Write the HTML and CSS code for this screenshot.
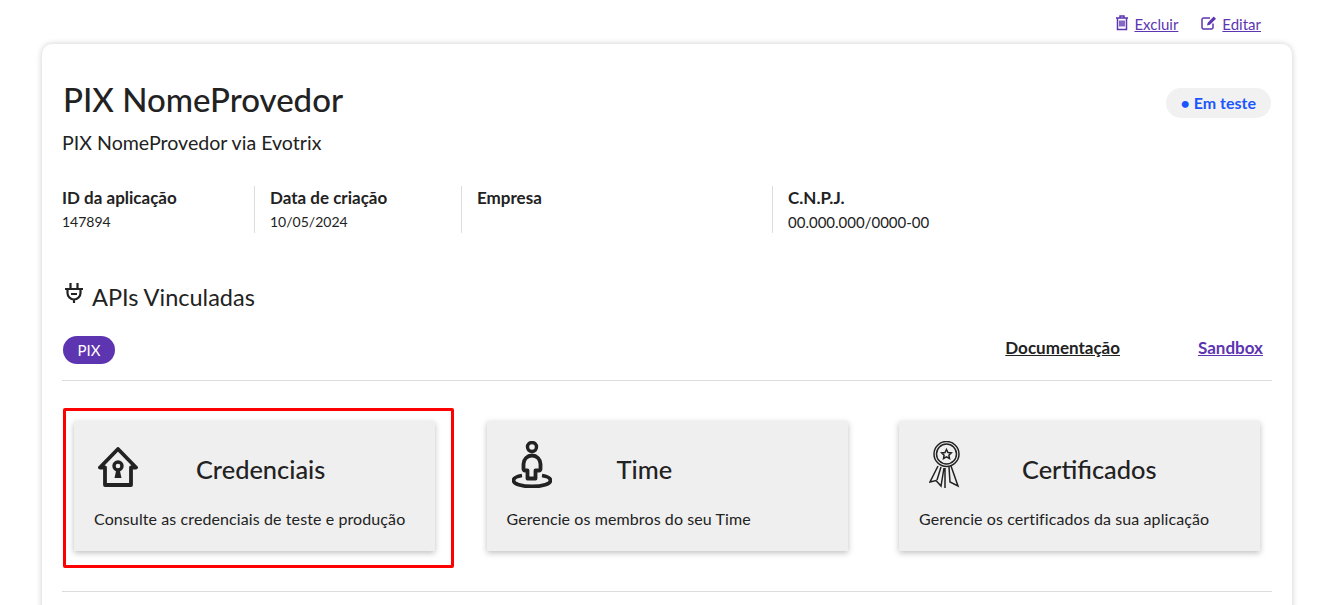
FILE: index.html
```html
<!DOCTYPE html>
<html lang="pt-BR">
<head>
    <meta charset="UTF-8">
    <meta name="viewport" content="width=device-width, initial-scale=1.0">
    <title>PIX NomeProvedor</title>
    <link rel="stylesheet" href="styles.css">
</head>
<body>
    <div class="top-actions">
        <span class="action">
            <svg class="action-icon" viewBox="0 0 14 16" width="14" height="16"><path d="M1 3h12M5 3V1h4v2M2.500 3v11.500h9V3M5 5.500v6M7 5.500v6M9 5.500v6" fill="none" stroke="currentColor" stroke-width="1.500"/></svg>
            <a href="#">Excluir</a>
        </span>
        <span class="action action-edit">
            <svg class="action-icon" viewBox="0 0 17 15" width="17" height="15"><path d="M12 8.500V12.500a1.500 1.500 0 0 1-1.500 1.500h-8A1.500 1.500 0 0 1 1 12.500v-8A1.500 1.500 0 0 1 2.500 3H9" fill="none" stroke="currentColor" stroke-width="1.500"/><path d="M6 10.500l.7-2.800 6-6.200 2.300 2.200-6.100 6.100z" fill="currentColor"/></svg>
            <a href="#">Editar</a>
        </span>
    </div>

    <div class="app-card">
        <div class="app-header">
            <div>
                <h1>PIX NomeProvedor</h1>
                <p class="subtitle">PIX NomeProvedor via Evotrix</p>
            </div>
            <span class="status">• Em teste</span>
        </div>

        <div class="info-row">
            <div class="info-item">
                <strong>ID da aplicação</strong>
                <span>147894</span>
            </div>
            <div class="info-item">
                <strong>Data de criação</strong>
                <span>10/05/2024</span>
            </div>
            <div class="info-item">
                <strong>Empresa</strong>
                <span></span>
            </div>
            <div class="info-item">
                <strong>C.N.P.J.</strong>
                <span class="cnpj">00.000.000/0000-00</span>
            </div>
        </div>

        <h2 class="section-title">
            <svg viewBox="0 0 18 20" width="18" height="20"><path d="M5.500 0v6M12.500 0v6M0 6h18M2.500 6v4a6.500 6.500 0 0 0 13 0V6M9 16v4M6 11h6" fill="none" stroke="#222" stroke-width="2.200"/></svg>
            APIs Vinculadas
        </h2>

        <div class="api-row">
            <span class="pill">PIX</span>
            <div class="api-links">
                <a href="#" class="doc-link">Documentação</a>
                <a href="#" class="sandbox-link">Sandbox</a>
            </div>
        </div>

        <div class="tiles">
            <div class="tile tile-selected">
                <div class="tile-head">
                    <svg class="tile-icon icon-house" viewBox="0 0 40 40" width="40" height="40"><path d="M2 20.500L20 2l18 18.500h-5M2 20.500h5M7 20.500V38h26V20.500" fill="none" stroke="#222" stroke-width="3.800" stroke-linejoin="round" stroke-linecap="round"/><circle cx="20" cy="19" r="4" fill="none" stroke="#222" stroke-width="3.400"/><path d="M18.500 22h3l2 9h-7z" fill="#222"/></svg>
                    <h3 class="title-credenciais">Credenciais</h3>
                </div>
                <p>Consulte as credenciais de teste e produção</p>
            </div>
            <div class="tile">
                <div class="tile-head">
                    <svg class="tile-icon icon-person" viewBox="0 0 40 47" width="40" height="47"><circle cx="20" cy="6" r="4.500" fill="none" stroke="#222" stroke-width="3.400"/><path d="M15.500 37.500V29.500H13a1.500 1.500 0 0 1-1.500-1.500V23a8.500 8.500 0 0 1 17 0v5a1.500 1.500 0 0 1-1.500 1.500h-3.500V37.500z" fill="none" stroke="#222" stroke-width="3.800" stroke-linejoin="round"/><path d="M10 34.500C4 35.500 1.500 37.500 1.500 39.500c0 3.500 8 6 18.500 6s18.500-2.500 18.500-6c0-2-2.500-4-8.500-5" fill="none" stroke="#222" stroke-width="3.800"/></svg>
                    <h3 class="title-time">Time</h3>
                </div>
                <p>Gerencie os membros do seu Time</p>
            </div>
            <div class="tile">
                <div class="tile-head">
                    <svg class="tile-icon icon-badge" viewBox="0 0 32 47" width="32" height="47"><circle cx="17.500" cy="13" r="12.500" fill="none" stroke="#222" stroke-width="1.500"/><circle cx="17.500" cy="13" r="10" fill="none" stroke="#222" stroke-width="1.500"/><path d="M17.500 8.500l1.500 3 3.300.4-2.400 2.300.6 3.300-3-1.600-3 1.600.6-3.300-2.400-2.300 3.300-.4z" fill="none" stroke="#222" stroke-width="1.500"/><path d="M9 25L1 41l6-1.500 5 5.500 3-18M12 26L8 39M16 27v20M20 26l1 15 8 4-7-20" fill="none" stroke="#222" stroke-width="1.500"/></svg>
                    <h3 class="title-certificados">Certificados</h3>
                </div>
                <p>Gerencie os certificados da sua aplicação</p>
            </div>
        </div>

        <hr class="bottom-line">
    </div>
</body>
</html>
```

FILE: styles.css
```css
body {
    font-family: "Lato", "Noto Sans", sans-serif;
    margin: 0;
    padding: 0;
    background-color: #fff;
    color: #222;
    height: 605px;
    overflow: hidden;
}
a {
    color: #5e35b1;
}
.top-actions {
    display: flex;
    justify-content: flex-end;
    align-items: center;
    gap: 23px;
    height: 44px;
    box-sizing: border-box;
    padding: 4px 64px 0 0;
    font-size: 15px;
}
.action {
    display: flex;
    align-items: flex-start;
    gap: 5px;
    color: #5e35b1;
}
.action-edit {
    gap: 4px;
}
.app-card {
    margin: 0 33px 0 42px;
    padding: 28px 20px 40px 20px;
    background-color: #fff;
    border-radius: 10px;
    box-shadow: 0 0 6px rgba(0,0,0,0.2);
}
.app-header {
    display: flex;
    justify-content: space-between;
    align-items: flex-start;
}
h1 {
    margin: 7px 0 0 1px;
    font-size: 33px;
    line-height: 40px;
    font-weight: 500;
}
.subtitle {
    margin: 12px 0 0 0;
    font-size: 19.6px;
    line-height: 24px;
}
.status {
    margin: 16px 1px 0 0;
    padding: 0 15px;
    height: 30px;
    line-height: 30px;
    border-radius: 15px;
    background-color: #f1f1f1;
    color: #1a56ff;
    font-size: 16px;
    font-weight: 700;
}
.info-row {
    display: grid;
    grid-template-columns: 192px 207px 311px 1fr;
    margin-top: 31px;
}
.info-item {
    display: flex;
    flex-direction: column;
    gap: 5px;
    height: 47px;
    padding-left: 15px;
    padding-top: 2px;
    box-sizing: border-box;
    border-left: 1px solid #ddd;
    font-size: 14px;
}
.info-item:first-child {
    padding-left: 0;
    border-left: none;
}
.info-item strong {
    font-size: 17px;
    line-height: 20px;
}
.info-item .cnpj {
    font-size: 15px;
}
.section-title {
    display: flex;
    align-items: center;
    gap: 9px;
    margin: 49px 0 0 3px;
    font-size: 23.5px;
    line-height: 30px;
    font-weight: 400;
}
.section-title svg {
    margin-top: -8px;
}
.api-row {
    display: flex;
    justify-content: space-between;
    align-items: center;
    height: 44px;
    margin-top: 16px;
    padding-bottom: 8px;
    border-bottom: 1px solid #ddd;
}
.pill {
    margin-left: 1px;
    padding: 0 14.5px;
    height: 28px;
    line-height: 28px;
    border-radius: 14px;
    background-color: #5e35b1;
    color: #fff;
    font-size: 15px;
}
.api-links {
    display: flex;
    gap: 78px;
    margin: 0 9px 5px 0;
    font-size: 17px;
    font-weight: 700;
}
.doc-link {
    color: #222;
}
.tiles {
    display: grid;
    grid-template-columns: repeat(3, 361px);
    gap: 51.5px;
    margin: 40px 0 0 12px;
}
.tile {
    position: relative;
    height: 130px;
    padding: 20px;
    box-sizing: border-box;
    background-color: #efefef;
    box-shadow: 0 2px 6px rgba(0,0,0,0.25);
}
.tile-selected::after {
    content: "";
    position: absolute;
    top: -13px;
    left: -11px;
    right: -19px;
    bottom: -17px;
    border: 3px solid #f00;
    border-radius: 2px;
}
.tile-head {
    display: flex;
    align-items: center;
    height: 58px;
}
.tile-icon {
    flex: none;
}
.icon-house {
    margin: 0 0 6px 4px;
}
.icon-person {
    margin: 0 0 11px 5px;
}
.icon-badge {
    margin: 0 0 11px 10px;
}
.tile h3 {
    margin: 0 0 2px 0;
    font-size: 25.4px;
    font-weight: 500;
}
.tile h3.title-credenciais {
    margin-left: 58px;
}
.tile h3.title-time {
    margin-left: 65px;
}
.tile h3.title-certificados {
    margin-left: 61px;
}
.tile p {
    margin: 10px 0 0 0;
    font-size: 16px;
    line-height: 20px;
    letter-spacing: 0.1px;
}
.bottom-line {
    margin: 40px 0 0 0;
    border: none;
    border-top: 1px solid #ddd;
}
```
